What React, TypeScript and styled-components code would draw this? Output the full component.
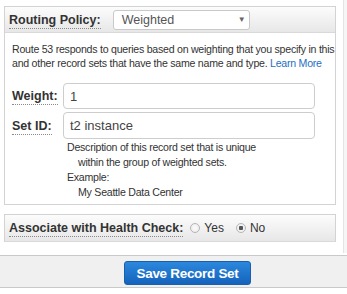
import React from 'react';
import styled, { createGlobalStyle } from 'styled-components';

const GlobalStyle = createGlobalStyle`
  html, body {
    margin: 0;
    padding: 0;
    background: #fff;
  }
  body {
    font-family: "Liberation Sans", Arial, sans-serif;
    color: #333;
  }
`;

const Page = styled.div`
  width: 347px;
  height: 294px;
  display: flex;
  flex-direction: column;
  background: #fff;
  overflow: hidden;
`;

const ScrollArea = styled.div`
  height: 253px;
  display: flex;
  flex-shrink: 0;
`;

const Content = styled.div`
  width: 343px;
  box-sizing: border-box;
  padding: 6px 7px 0 4px;
  display: flex;
  flex-direction: column;
  gap: 9px;
`;

const Track = styled.div`
  flex: 1;
  border-left: 1px solid #e4e4e4;
  background: #f6f6f6;
`;

const Panel = styled.div`
  border: 1px solid #d3d3d3;
  background: #fff;
`;

const Bar = styled.div<{ $height: number; $bordered?: boolean }>`
  height: ${(p) => p.$height}px;
  display: flex;
  align-items: center;
  padding: 0 5px 0 4px;
  background: linear-gradient(#fcfcfc, #e7e7e7);
  border: ${(p) => (p.$bordered ? '1px solid #d3d3d3' : 'none')};
  border-bottom: 1px solid #d9d9d9;
`;

const Label = styled.span`
  font-size: 12.5px;
  font-weight: bold;
  color: #333;
  flex-shrink: 0;
`;

const Dotted = styled.span`
  border-bottom: 1px dotted #8a8a8a;
  padding-bottom: 1px;
`;

const Select = styled.div`
  margin-left: 12px;
  width: 137px;
  height: 20px;
  box-sizing: border-box;
  border: 1px solid #c9c9c9;
  border-radius: 3px;
  background: #fff;
  display: flex;
  align-items: center;
  justify-content: space-between;
  padding: 0 3px 0 8px;
  font-size: 12.5px;
  color: #555;
`;

const Arrow = styled.span`
  font-size: 8px;
  color: #666;
`;

const Intro = styled.p`
  margin: 0;
  padding: 9px 4px 0 7px;
  font-size: 10.6px;
  letter-spacing: -0.25px;
  line-height: 14px;
  color: #333;
  white-space: nowrap;
`;

const Link = styled.a`
  color: #1f6fbf;
  text-decoration: none;
`;

const Form = styled.div`
  margin-top: 13px;
  padding: 0 20px 4px 7px;
  display: grid;
  grid-template-columns: 51px 1fr;
  row-gap: 3px;
  align-items: center;
`;

const Input = styled.div<{ $height: number }>`
  height: ${(p) => p.$height}px;
  box-sizing: border-box;
  border: 1px solid #cdcdcd;
  border-radius: 4px;
  display: flex;
  align-items: center;
  padding-left: 6px;
  font-size: 13px;
  color: #444;
`;

const Help = styled.div`
  grid-column: 2;
  margin-top: -2px;
  padding-left: 4px;
  font-size: 10.6px;
  letter-spacing: -0.25px;
  line-height: 15px;
  color: #333;
`;

const Indent = styled.div`
  padding-left: 11px;
`;

const RadioGroup = styled.div`
  display: flex;
  align-items: center;
  margin-left: 7px;
  gap: 12px;
`;

const RadioItem = styled.label`
  display: flex;
  align-items: center;
  gap: 4px;
  font-size: 12px;
  color: #333;
`;

const Circle = styled.span<{ $checked?: boolean }>`
  width: 10px;
  height: 10px;
  box-sizing: border-box;
  border-radius: 50%;
  border: 1px solid #b5b5b5;
  background: radial-gradient(circle, ${(p) => (p.$checked ? '#555 0 2px, #f2f2f2 2.5px' : '#fbfbfb 0, #eaeaea 100%')});
`;

const Footer = styled.div`
  margin-top: 2px;
  height: 33px;
  box-sizing: border-box;
  border-top: 1px solid #c9c9c9;
  border-bottom: 1px solid #c9c9c9;
  background: #f0f0f0;
  display: flex;
  align-items: flex-start;
  padding: 5px 0 0 124px;
`;

const Button = styled.button`
  width: 127px;
  height: 24px;
  border: 1px solid #1b5ea9;
  border-radius: 3px;
  background: linear-gradient(#2c88dc, #1463bd);
  color: #fff;
  font-family: "Liberation Sans", Arial, sans-serif;
  font-size: 13.5px;
  font-weight: bold;
  letter-spacing: -0.3px;
  padding: 0;
`;

const App = () => {
  return (
    <Page>
      <GlobalStyle />
      <ScrollArea>
        <Content>
          <Panel>
            <Bar $height={25}>
              <Label><Dotted>Routing Policy:</Dotted></Label>
              <Select>
                <span>Weighted</span>
                <Arrow>▼</Arrow>
              </Select>
            </Bar>
            <Intro>
              Route 53 responds to queries based on weighting that you specify in this
              <br />
              and other record sets that have the same name and type. <Link href="#">Learn More</Link>
            </Intro>
            <Form>
              <Label><Dotted>Weight:</Dotted></Label>
              <Input $height={26}>1</Input>
              <Label><Dotted>Set ID:</Dotted></Label>
              <Input $height={27}>t2 instance</Input>
              <Help>
                <div>Description of this record set that is unique</div>
                <Indent>within the group of weighted sets.</Indent>
                <div>Example:</div>
                <Indent>My Seattle Data Center</Indent>
              </Help>
            </Form>
          </Panel>
          <Bar $height={26} $bordered>
            <Label><Dotted>Associate with Health Check:</Dotted></Label>
            <RadioGroup>
              <RadioItem><Circle />Yes</RadioItem>
              <RadioItem><Circle $checked />No</RadioItem>
            </RadioGroup>
          </Bar>
        </Content>
        <Track />
      </ScrollArea>
      <Footer>
        <Button>Save Record Set</Button>
      </Footer>
    </Page>
  );
};

export default App;
